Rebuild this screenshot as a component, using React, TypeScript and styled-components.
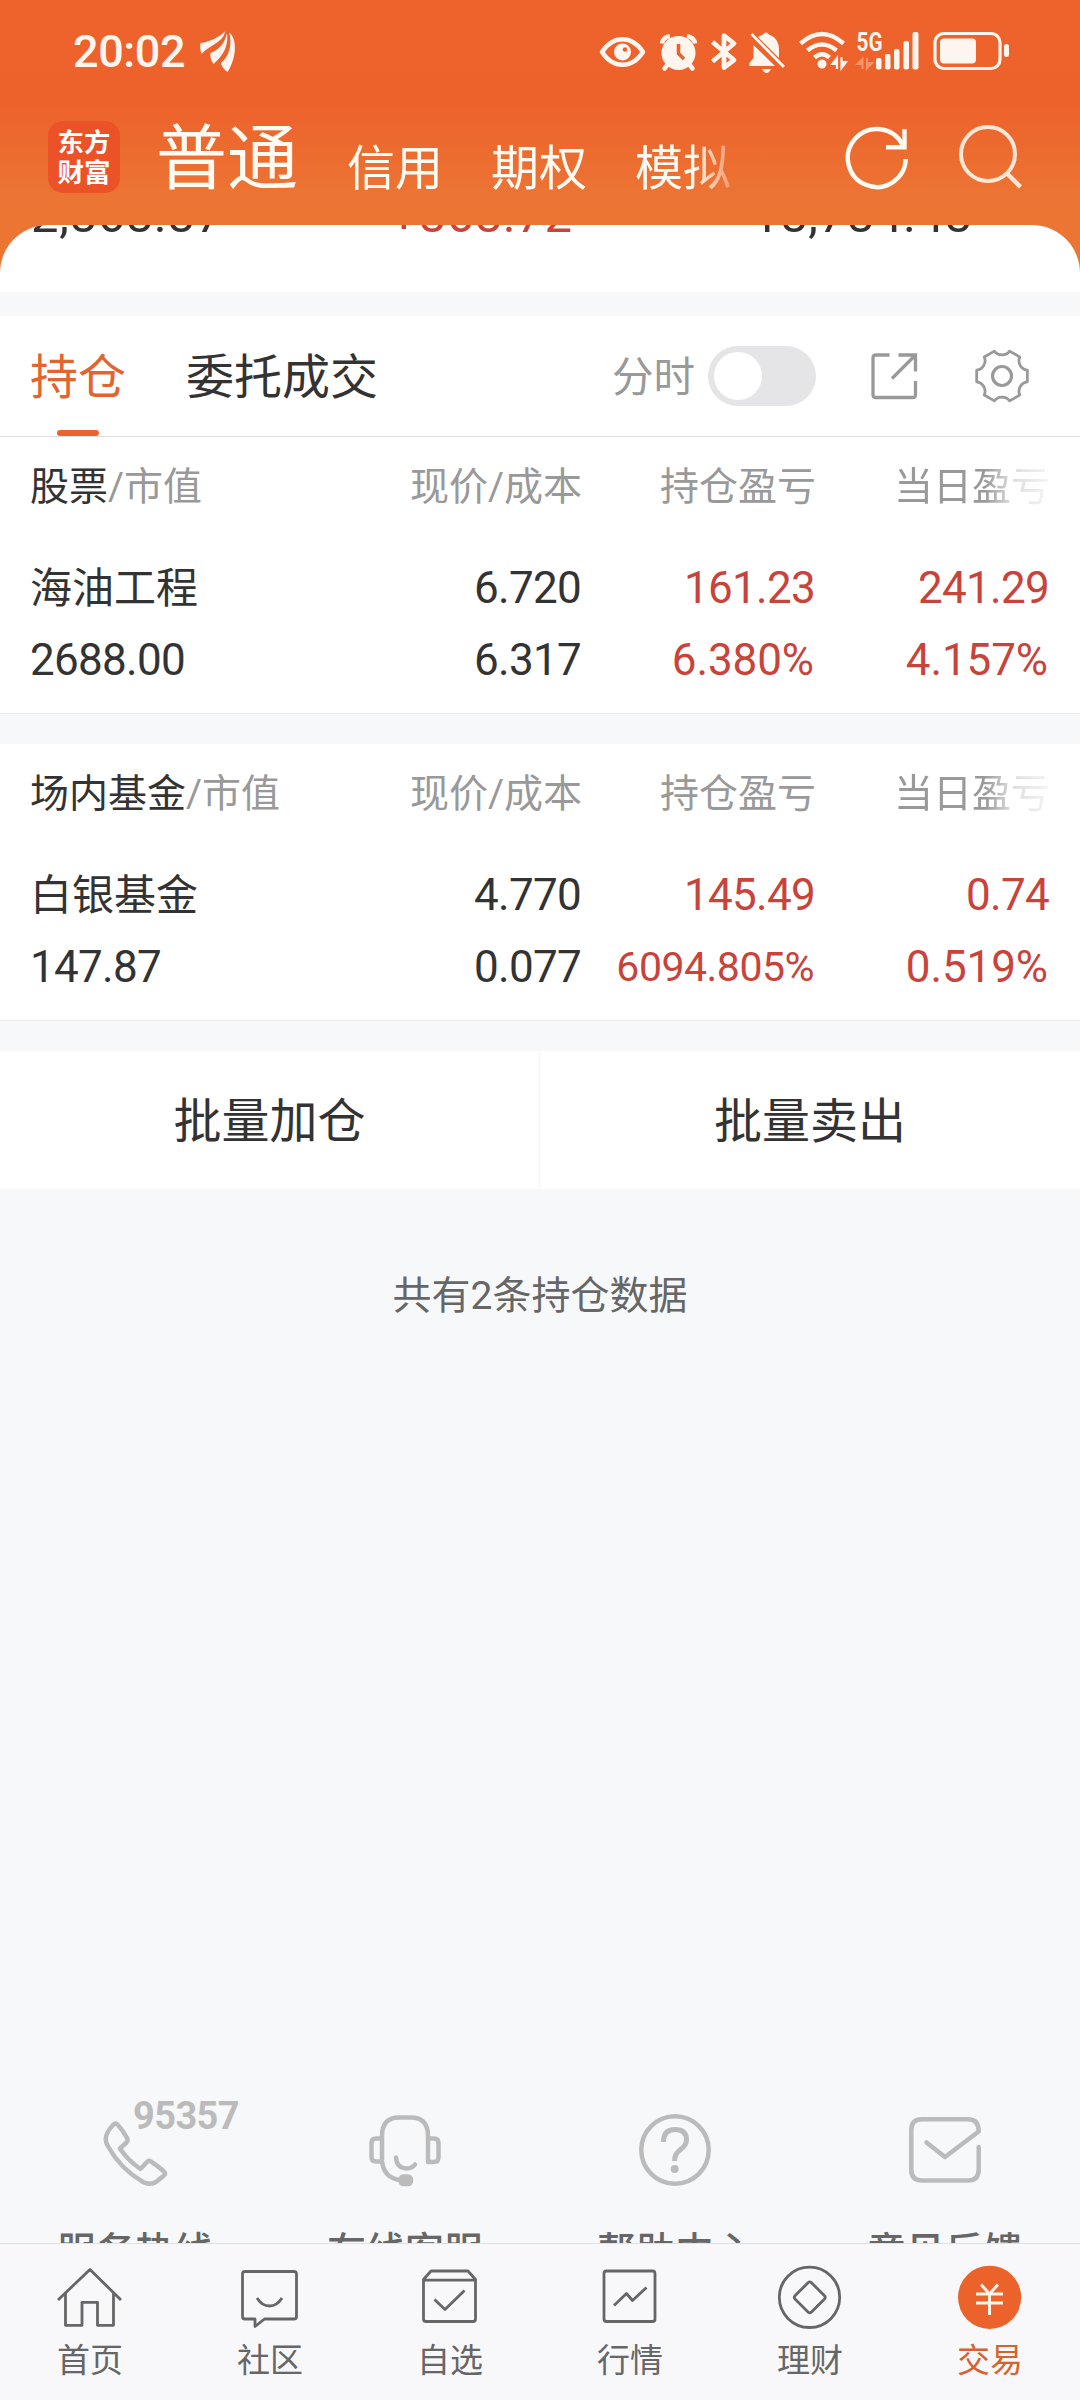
import React from "react";
import styled, { createGlobalStyle } from "styled-components";

const GlobalStyle = createGlobalStyle`
  * { box-sizing: border-box; }
  body {
    margin: 0;
    background: #f7f8fa;
    font-family: Roboto, "Noto Sans CJK SC", sans-serif;
    color: #333;
  }
  svg { display: block; flex: none; }
`;

const Screen = styled.div`
  width: 1080px;
  height: 2400px;
  display: flex;
  flex-direction: column;
  overflow: hidden;
  background: #f7f8fa;
`;

/* ---------- top area ---------- */

const Top = styled.header`
  height: 292px;
  flex: none;
  background: linear-gradient(#ee622b 0, #ed622b 105px, #ec7534 200px, #ec7534 100%);
`;

const StatusBar = styled.div`
  height: 105px;
  display: flex;
  align-items: flex-start;
  padding: 30px 71px 0 73px;
`;

const Clock = styled.span`
  font-size: 45px;
  line-height: 44px;
  font-weight: 500;
  letter-spacing: -0.4px;
  color: #fff5ef;
  width: 126px;
`;

const StatusIcons = styled.div`
  display: flex;
  margin-left: auto;
`;

const TitleBar = styled.div`
  height: 120px;
  display: flex;
  align-items: flex-end;
  padding: 0 56px 30px 48px;
`;

const Logo = styled.div`
  width: 72px;
  height: 72px;
  margin: 0 36px 2px 0;
  padding-top: 7px;
  border-radius: 15px;
  background: #ec5228;
  color: #fff;
  font-size: 26.5px;
  line-height: 30px;
  font-weight: 700;
  text-align: center;
`;

const Accounts = styled.nav`
  width: 590px;
  display: flex;
  align-items: flex-end;
  gap: 48px;
  color: #fffaf2;
  white-space: nowrap;
  mask-image: linear-gradient(to right, #000 538px, transparent 590px);
`;

const Account = styled.span<{ $active?: boolean }>`
  font-size: ${(p) => (p.$active ? 71 : 48)}px;
  line-height: ${(p) => (p.$active ? 72 : 48)}px;
  margin-bottom: ${(p) => (p.$active ? 0 : 2)}px;
  margin-right: ${(p) => (p.$active ? 1 : 0)}px;
`;

const Actions = styled.div`
  display: flex;
  align-items: flex-end;
  gap: 48px;
  margin: 0 0 3px auto;
`;

const Summary = styled.section`
  height: 67px;
  padding: 0 31px;
  display: grid;
  grid-template-columns: 359px 362px 1fr;
  align-items: start;
  overflow: hidden;
  border-radius: 48px 48px 0 0;
  background: #fff;
`;

const SummaryValue = styled.span<{ $up?: boolean }>`
  margin-top: -33px;
  font-size: 49px;
  line-height: 48px;
  letter-spacing: 0.6px;
  color: ${(p) => (p.$up ? "#cc4138" : "#333")};
`;

/* ---------- tabs ---------- */

const TabBar = styled.div`
  flex: none;
  height: 121px;
  margin-top: 24px;
  padding: 0 50px 0 30px;
  display: flex;
  align-items: center;
  background: #fff;
  border-bottom: 1px solid #e0e0e0;
`;

const Tab = styled.div<{ $active?: boolean }>`
  height: 120px;
  margin-right: 60px;
  display: flex;
  flex-direction: column;
  align-items: center;
  padding-top: 38px;
  font-size: 48px;
  line-height: 48px;
  color: ${(p) => (p.$active ? "#e2642f" : "#333")};
`;

const TabMark = styled.i`
  width: 42px;
  height: 6px;
  margin-top: auto;
  border-radius: 3px;
  background: #e96430;
`;

const TabTools = styled.div`
  margin-left: auto;
  display: flex;
  align-items: center;
`;

const ToolLabel = styled.span`
  padding-top: 3px;
  margin-right: 13px;
  font-size: 41.5px;
  line-height: 48px;
  color: #999;
`;

const Switch = styled.div`
  width: 108px;
  height: 60px;
  margin-right: 53px;
  padding: 6px;
  border-radius: 30px;
  background: #e5e5e7;
`;

const Knob = styled.div`
  width: 48px;
  height: 48px;
  border-radius: 50%;
  background: #fff;
`;

const IconGroup = styled.div`
  display: flex;
  align-items: center;
  gap: 55px;
`;

/* ---------- holdings ---------- */

const Holding = styled.section`
  flex: none;
  height: 277px;
  margin-bottom: 30px;
  padding: 0 30px;
  background: #fff;
  border-bottom: 1px solid #ebecee;
`;

const Row = styled.div<{ $head?: boolean }>`
  display: grid;
  grid-template-columns: 317px 234px 234px 234px;
  height: ${(p) => (p.$head ? 96 : 72)}px;
  line-height: ${(p) => (p.$head ? 96 : 72)}px;
  margin-bottom: ${(p) => (p.$head ? 18 : 0)}px;
  padding-top: ${(p) => (p.$head ? 2 : 1)}px;
  font-size: 39px;
  color: #999;
  white-space: nowrap;
`;

const Strong = styled.span`
  color: #333;
`;

const HeadCell = styled.span<{ $fade?: boolean }>`
  text-align: right;
  margin-right: -1px;
  ${(p) =>
    p.$fade
      ? "mask-image: linear-gradient(to right, #000 170px, rgba(0,0,0,.35) 196px, rgba(0,0,0,.1) 234px);"
      : ""}
`;

const Name = styled.span`
  padding-top: 1px;
  font-size: 42px;
  color: #333;
`;

const Num = styled.span<{ $up?: boolean; $left?: boolean; $small?: boolean; $pct?: boolean }>`
  text-align: ${(p) => (p.$left ? "left" : "right")};
  font-size: ${(p) => (p.$small ? 41 : 44)}px;
  letter-spacing: ${(p) => (p.$small ? -0.5 : p.$pct ? -0.1 : -0.7)}px;
  margin-right: ${(p) => (p.$pct ? 1 : 0)}px;
  color: ${(p) => (p.$up ? "#c8443b" : "#333")};
`;

/* ---------- batch actions ---------- */

const Batch = styled.div`
  flex: none;
  height: 138px;
  display: grid;
  grid-template-columns: 540px 540px;
  background: #fff;
`;

const BatchButton = styled.button`
  border: 0;
  background: none;
  font: 48px/48px Roboto, "Noto Sans CJK SC", sans-serif;
  color: #333;
  padding: 3px 0 0;

  &:first-child {
    border-right: 1px solid #f5f5f7;
  }
`;

const Total = styled.p`
  margin: 83px 0 0;
  font-size: 39px;
  line-height: 48px;
  text-align: center;
  color: #666;
`;

/* ---------- service links ---------- */

const Services = styled.div`
  margin-top: auto;
  flex: none;
  height: 155px;
  display: grid;
  grid-template-columns: repeat(4, 270px);
  overflow: hidden;
`;

const Service = styled.div`
  position: relative;
  height: 200px;
  display: flex;
  flex-direction: column;
  align-items: center;
  padding-top: 24px;
  font-size: 39px;
  line-height: 48px;
  font-weight: 500;
  color: #666;
`;

const ServiceName = styled.span`
  margin-top: 40px;
`;

const Hotline = styled.span`
  position: absolute;
  left: 133px;
  top: 9px;
  font-size: 38px;
  line-height: 38px;
  font-weight: 700;
  letter-spacing: -0.6px;
  color: #bbb;
`;

/* ---------- bottom navigation ---------- */

const NavBar = styled.nav`
  flex: none;
  height: 157px;
  display: grid;
  grid-template-columns: repeat(6, 180px);
  background: #f8f8fb;
  border-top: 1px solid #dfe1e4;
`;

const NavItem = styled.div<{ $active?: boolean }>`
  display: flex;
  flex-direction: column;
  align-items: center;
  padding-top: 20px;
  font-size: 33px;
  line-height: 40px;
  color: ${(p) => (p.$active ? "#d8622e" : "#666")};
`;

const NavName = styled.span`
  margin-top: 11px;
`;

/* ---------- icons ---------- */

const CREAM = "#fff5ef";

const BrandMark = () => (
  <svg width="37" height="44" viewBox="199 30 37 44" fill={CREAM}>
    <path d="M200.500 43 C210 42 219 37 225 31.500 L224 35 C220 43.500 209 45.500 201.500 54 C200 50 200 46 200.500 43 Z" />
    <path d="M227 33 C228.500 44 225 54 213.500 64 C211 60 210 57 210.300 53 C219 50 225 43 227 33 Z" />
    <path d="M229.300 32.500 C237.500 39 236.500 58 227.500 72 C223.500 69 221.300 66 221 63 C230 55 232 44 229.300 32.500 Z" />
  </svg>
);

const StatusGlyphs = () => (
  <StatusIcons>
    <svg width="60" height="44" viewBox="599 30 60 44">
      <path d="M602 52 C613 35 632 35 643 52 C632 69 613 69 602 52 Z" fill="none" stroke={CREAM} strokeWidth="4.5" strokeLinejoin="round" />
      <circle cx="622.5" cy="52" r="8.5" fill={CREAM} />
      <circle cx="625" cy="49.500" r="2.300" fill="#ed622b" />
    </svg>
    <svg width="50" height="44" viewBox="659 30 50 44">
      <circle cx="678.500" cy="53" r="17" fill={CREAM} />
      <path d="M662 43.500 Q663 37 670 36.200 M687 36.200 Q694 37 695 43.500" fill="none" stroke={CREAM} strokeWidth="4.500" />
      <path d="M668 64 L664.500 68.500 M689 64 L692.500 68.500" stroke={CREAM} strokeWidth="4.500" strokeLinecap="round" />
      <path d="M678.500 44 V53.500 L684 59" fill="none" stroke="#ed622b" strokeWidth="3.600" />
    </svg>
    <svg width="38" height="44" viewBox="709 30 38 44">
      <path d="M712.500 42 L734 60 L724 67.500 V35.500 L734 43.500 L712.500 61.500" fill="none" stroke={CREAM} strokeWidth="4.700" strokeLinejoin="round" />
    </svg>
    <svg width="50" height="44" viewBox="747 30 50 44" fill={CREAM}>
      <path d="M753.500 45 L775 66 H749.500 V63 L753.500 58 Z" />
      <path d="M758 37 Q761 35 763 34.500 Q766 30.500 769 34.500 Q779 38 779 50 V58 Z" />
      <path d="M762 69 H771 Q769 73 766.500 73 Q764 73 762 69 Z" />
      <path d="M751.500 34 L784 67" stroke={CREAM} strokeWidth="2.800" />
    </svg>
    <svg width="58" height="44" viewBox="797 30 58 44" fill="none" stroke={CREAM} strokeWidth="4.500">
      <path d="M800.500 43.500 Q822 24.500 843.500 43.500 M807.500 50.500 Q822 38.500 836.500 50.500 M814.500 57.500 Q822 51 829.500 57.500" />
      <circle cx="822" cy="64" r="4.500" fill={CREAM} stroke="none" />
      <path d="M837 69 V58 L832.500 64 H837 M841.500 57 V68 L846 62 H841.500" strokeWidth="2.200" fill={CREAM} />
    </svg>
    <svg width="76" height="44" viewBox="855 30 76 44" fill={CREAM}>
      <text x="856.500" y="50.800" fontFamily="Roboto" fontWeight="700" fontSize="26" textLength="26" lengthAdjust="spacingAndGlyphs">5G</text>
      <path d="M862.500 69 V59 L857.500 64 H862.500 M867 58 V68 L872 63 H867" stroke="#f9936c" strokeWidth="2" fill="#f9936c" />
      <rect x="876" y="58" width="5.500" height="11.500" rx="2" />
      <rect x="885" y="54" width="5.500" height="15.500" rx="2" />
      <rect x="894" y="49" width="5.500" height="20.500" rx="2" />
      <rect x="903.500" y="41" width="5.500" height="28.500" rx="2" />
      <rect x="912.500" y="32" width="6" height="37.500" rx="2" />
    </svg>
    <svg width="78" height="44" viewBox="931 30 78 44">
      <rect x="935" y="33.500" width="65" height="35" rx="9" fill="none" stroke={CREAM} strokeWidth="3.200" />
      <rect x="940" y="38.500" width="36" height="25" rx="4" fill={CREAM} />
      <rect x="1004" y="44" width="5" height="13" rx="2.500" fill={CREAM} />
    </svg>
  </StatusIcons>
);

const RefreshIcon = () => (
  <svg width="66" height="66" viewBox="843 126 66 66" fill="none" stroke="#fffaf2" strokeWidth="4.400">
    <path d="M904.800 159 A29 29 0 1 1 901.500 144.500" />
    <path d="M903.500 129 V147.300 H885" />
  </svg>
);

const SearchIcon = () => (
  <svg width="66" height="68" viewBox="957 124 66 68" fill="none" stroke="#ffe6d6" strokeWidth="4">
    <circle cx="987" cy="154" r="27" />
    <path d="M1005.500 173 L1019.500 187" strokeWidth="4.500" />
  </svg>
);

const ShareIcon = () => (
  <svg width="50" height="50" viewBox="869 351 50 50" fill="none" stroke="#999" strokeWidth="3.300">
    <path d="M889.500 355 H876 Q873 355 873 358 V395 Q873 397.500 876 397.500 H913 Q915.500 397.500 915.500 395 V381" />
    <path d="M898.500 355 H915.500 V371.500 M914.500 356 L892 378.500" />
  </svg>
);

const gearPath = (() => {
  const at = (deg: number) => {
    const a = (deg * Math.PI) / 180;
    return `${(28 + 26 * Math.cos(a)).toFixed(2)} ${(28 + 26 * Math.sin(a)).toFixed(2)}`;
  };
  let d = `M${at(-13)}`;
  for (let i = 0; i < 6; i++) {
    d += ` L${at(i * 60 + 13)} A9.500 9.500 0 0 0 ${at(i * 60 + 47)}`;
  }
  return d + "Z";
})();

const GearIcon = () => (
  <svg width="56" height="56" viewBox="0 0 56 56" fill="none" stroke="#999" strokeWidth="2.800" strokeLinejoin="round">
    <path d={gearPath} />
    <circle cx="28" cy="28" r="9.500" strokeWidth="3.200" />
  </svg>
);

const service = { fill: "none", stroke: "#bbb", strokeWidth: 4.5, strokeLinecap: "round", strokeLinejoin: "round" } as const;

const PhoneIcon = () => (
  <svg width="76" height="76" viewBox="97 2112 76 76" {...service}>
    <path d="M113.500 2124.500 Q115.500 2122.500 117.500 2124.500 Q123 2130.500 127 2138 Q128.500 2140.500 126.500 2142.500 L120 2148.500 Q128 2160.500 140.500 2169 L147.500 2161.500 Q149 2160 151 2161.500 Q158 2166 164 2171.500 Q166 2173.500 164 2175.500 L156 2182 Q150 2185.500 143 2182 Q120 2168.500 107.500 2145.500 Q104 2139 107.500 2132.500 Q110 2128 113.500 2124.500 Z" />
  </svg>
);

const HeadsetIcon = () => (
  <svg width="76" height="76" viewBox="367 2112 76 76" {...service}>
    <path d="M382 2162 V2136 Q382 2117.500 399 2117.500 H411 Q428 2117.500 428 2136 V2162 H434 Q438.500 2162 438.500 2157.500 V2143 Q438.500 2138.500 434 2138.500 H428 M382 2138.500 H376 Q371.500 2138.500 371.500 2143 V2157 Q371.500 2161.500 376 2161.500 H382 Q384 2178 400 2180" />
    <path d="M396 2157.500 Q396.500 2168 406.500 2168.500 Q412 2168.500 415 2164.500" />
    <rect x="400.500" y="2176.500" width="10.500" height="7.500" rx="3" fill="#bbb" />
  </svg>
);

const HelpIcon = () => (
  <svg width="76" height="76" viewBox="637 2112 76 76" {...service}>
    <circle cx="675" cy="2150" r="33.700" />
    <path d="M663.500 2142 Q663.500 2129.500 675 2129.500 Q686.500 2129.500 686.500 2140 Q686.500 2145 680.500 2149.500 Q674.500 2154 674.500 2161" strokeLinecap="butt" strokeWidth="5" />
    <circle cx="674.700" cy="2169" r="4" fill="#bbb" stroke="none" />
  </svg>
);

const MailIcon = () => (
  <svg width="76" height="76" viewBox="907 2112 76 76" {...service}>
    <path d="M978.700 2147 V2169.500 Q978.700 2180.500 968 2180.500 H922 Q911.300 2180.500 911.300 2169.500 V2130 Q911.300 2119.300 922 2119.300 H968 Q978.700 2119.300 978.700 2131.500 L945 2157 L926.500 2142.500" />
  </svg>
);

const line = { fill: "none", stroke: "#666", strokeWidth: 2.8, strokeLinejoin: "round" } as const;

const HomeIcon = () => (
  <svg width="66" height="66" viewBox="57 2264 66 66" {...line}>
    <path d="M58 2300 L90 2269.500 L121 2300 M65.500 2293 V2325.300 H82 V2302.300 H97.500 V2325.300 H113.500 V2293" />
  </svg>
);

const ChatIcon = () => (
  <svg width="66" height="66" viewBox="237 2264 66 66" {...line}>
    <path d="M245 2271.500 H294 Q296.500 2271.500 296.500 2274 V2316.500 Q296.500 2319 294 2319 H264.500 L255 2326.500 V2319 H245 Q242.500 2319 242.500 2316.500 V2274 Q242.500 2271.500 245 2271.500 Z" />
    <path d="M257 2298 Q262 2306 269.500 2306 Q277 2306 282 2298" />
  </svg>
);

const WatchIcon = () => (
  <svg width="66" height="66" viewBox="417 2264 66 66" {...line}>
    <path d="M431 2271 H468 L475.500 2279.500 V2319 Q475.500 2321.500 473 2321.500 H426 Q423.500 2321.500 423.500 2319 V2279.500 Z M423.500 2280.200 H475.500" />
    <path d="M434.500 2299.500 L445 2309.500 L464.500 2290.500" />
  </svg>
);

const MarketIcon = () => (
  <svg width="66" height="66" viewBox="597 2264 66 66" {...line}>
    <rect x="604" y="2271" width="51" height="50.500" rx="2.500" />
    <path d="M614 2305.500 L626.500 2293.500 L632.500 2300.500 L646.500 2287.500" />
  </svg>
);

const WealthIcon = () => (
  <svg width="66" height="66" viewBox="777 2264 66 66" {...line}>
    <circle cx="809.500" cy="2297.300" r="30.200" />
    <path d="M808 2282.800 Q809.700 2281 811.500 2282.800 L824.500 2295.700 Q826 2297.300 824.500 2299 L811.500 2312 Q809.700 2313.800 808 2312 L795 2299 Q793.500 2297.300 795 2295.700 Z" />
  </svg>
);

const TradeIcon = () => (
  <svg width="66" height="66" viewBox="957 2264 66 66" fill="none" stroke="#fff3ea" strokeWidth="3">
    <circle cx="989.600" cy="2297.300" r="31.600" fill="#ec622b" stroke="none" />
    <path d="M981 2284.500 L989.500 2294 L998 2284.500 M976 2294 H1003 M976 2303 H1003 M989.500 2294 V2315" />
  </svg>
);

/* ---------- data ---------- */

const holdings = [
  { kind: "股票", name: "海油工程", value: "2688.00", price: "6.720", cost: "6.317", gain: "161.23", gainPct: "6.380%", day: "241.29", dayPct: "4.157%" },
  { kind: "场内基金", name: "白银基金", value: "147.87", price: "4.770", cost: "0.077", gain: "145.49", gainPct: "6094.805%", day: "0.74", dayPct: "0.519%" },
];

const services = [
  { name: "服务热线", icon: <PhoneIcon />, hotline: "95357" },
  { name: "在线客服", icon: <HeadsetIcon /> },
  { name: "帮助中心", icon: <HelpIcon /> },
  { name: "意见反馈", icon: <MailIcon /> },
];

const navItems = [
  { name: "首页", icon: <HomeIcon /> },
  { name: "社区", icon: <ChatIcon /> },
  { name: "自选", icon: <WatchIcon /> },
  { name: "行情", icon: <MarketIcon /> },
  { name: "理财", icon: <WealthIcon /> },
  { name: "交易", icon: <TradeIcon />, active: true },
];

export default function App() {
  return (
    <>
      <GlobalStyle />
      <Screen>
        <Top>
          <StatusBar>
            <Clock>20:02</Clock>
            <BrandMark />
            <StatusGlyphs />
          </StatusBar>
          <TitleBar>
            <Logo>
              东方
              <br />
              财富
            </Logo>
            <Accounts>
              <Account $active>普通</Account>
              <Account>信用</Account>
              <Account>期权</Account>
              <Account>模拟</Account>
            </Accounts>
            <Actions>
              <RefreshIcon />
              <SearchIcon />
            </Actions>
          </TitleBar>
          <Summary>
            <SummaryValue>2,868.87</SummaryValue>
            <SummaryValue $up>+868.72</SummaryValue>
            <SummaryValue>18,784.48</SummaryValue>
          </Summary>
        </Top>

        <TabBar>
          <Tab $active>
            持仓
            <TabMark />
          </Tab>
          <Tab>委托成交</Tab>
          <TabTools>
            <ToolLabel>分时</ToolLabel>
            <Switch>
              <Knob />
            </Switch>
            <IconGroup>
              <ShareIcon />
              <GearIcon />
            </IconGroup>
          </TabTools>
        </TabBar>

        {holdings.map((h) => (
          <Holding key={h.name}>
            <Row $head>
              <span>
                <Strong>{h.kind}</Strong>/市值
              </span>
              <HeadCell>现价/成本</HeadCell>
              <HeadCell>持仓盈亏</HeadCell>
              <HeadCell $fade>当日盈亏</HeadCell>
            </Row>
            <Row>
              <Name>{h.name}</Name>
              <Num>{h.price}</Num>
              <Num $up>{h.gain}</Num>
              <Num $up>{h.day}</Num>
            </Row>
            <Row>
              <Num $left>{h.value}</Num>
              <Num>{h.cost}</Num>
              <Num $up $pct $small={h.gainPct.length > 8}>{h.gainPct}</Num>
              <Num $up $pct>{h.dayPct}</Num>
            </Row>
          </Holding>
        ))}

        <Batch>
          <BatchButton>批量加仓</BatchButton>
          <BatchButton>批量卖出</BatchButton>
        </Batch>
        <Total>共有2条持仓数据</Total>

        <Services>
          {services.map((s) => (
            <Service key={s.name}>
              {s.icon}
              {s.hotline && <Hotline>{s.hotline}</Hotline>}
              <ServiceName>{s.name}</ServiceName>
            </Service>
          ))}
        </Services>

        <NavBar>
          {navItems.map((n) => (
            <NavItem key={n.name} $active={n.active}>
              {n.icon}
              <NavName>{n.name}</NavName>
            </NavItem>
          ))}
        </NavBar>
      </Screen>
    </>
  );
}
